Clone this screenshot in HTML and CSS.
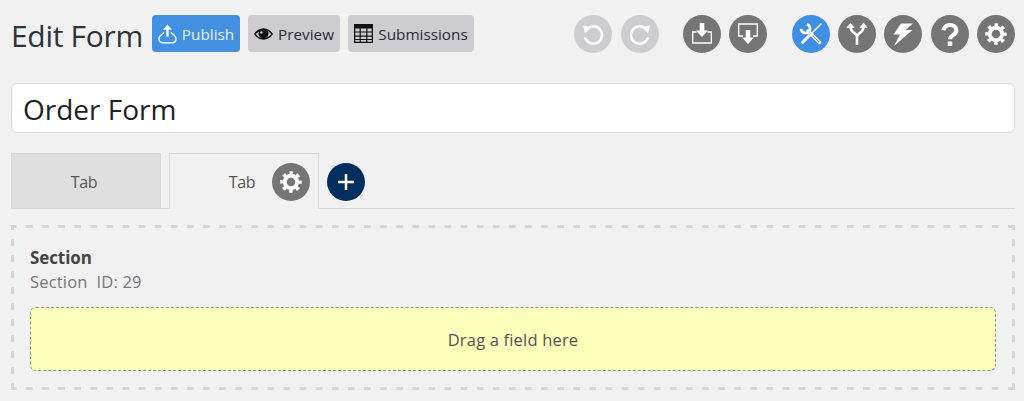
FILE: index.html
```html
<!DOCTYPE html>
<html lang="en">
<head>
<meta charset="utf-8">
<title>Edit Form</title>
<link rel="stylesheet" href="styles.css">
</head>
<body>
<svg class="defs" width="0" height="0" aria-hidden="true">
  <symbol id="gear" viewBox="0 0 24 24">
    <circle cx="12" cy="12" r="6.800" fill="none" stroke="#fff" stroke-width="4.200"/>
    <circle cx="12" cy="12" r="10" fill="none" stroke="#fff" stroke-width="3.400" stroke-dasharray="3.900 3.954" stroke-dashoffset="1.950"/>
  </symbol>
</svg>
<header class="toolbar">
  <h1 class="page-title">Edit Form</h1>
  <div class="actions">
    <button class="btn btn-blue">
      <svg class="btn-icon" viewBox="0 0 20 20"><path fill="none" stroke="#fff" stroke-width="1.400" d="M6.500 8.500C5 10 1 11.500 1 15c0 2.500 2 4.200 4 4.200h10c2.200 0 4-1.700 4-4.200 0-3-3.500-5-5.500-6.500"/><path fill="#fff" d="M10 0l4.600 5.500H11.200v7.500H8.800V5.500H5.400z"/></svg>
      Publish
    </button>
    <button class="btn btn-grey">
      <svg class="btn-icon eye" viewBox="0 0 20 12"><path fill="#111" fill-rule="evenodd" d="M0 6c2.500-3.800 6-6 10-6s7.500 2.200 10 6c-2.500 3.800-6 6-10 6S2.500 9.800 0 6zm1.800 0c1.500 2.100 3.400 3.500 5.400 4.200A5.300 5.300 0 0 1 4.700 6c0-.9.200-1.700.6-2.400C4 4.200 2.800 5 1.800 6zm11 4.200c2-.7 3.900-2.100 5.400-4.200-1-1.300-2.300-2.400-3.500-3 .4.900.600 1.900.600 3 0 1.700-1 3.200-2.500 4.200z"/><circle cx="7.800" cy="4.300" r="1.300" fill="#cdccd1"/></svg>
      Preview
    </button>
    <button class="btn btn-grey">
      <svg class="btn-icon table" viewBox="0 0 19 19"><path fill="#111" fill-rule="evenodd" d="M0 0h19v19H0zM1.300 4.500v3h4.300v-3zm5.500 0v3h5.400v-3zm6.600 0v3h4.300v-3zM1.300 8.600v3h4.300v-3zm5.500 0v3h5.400v-3zm6.600 0v3h4.300v-3zM1.300 12.700v2.300h4.300v-2.300zm5.500 0v2.300h5.400v-2.300zm6.600 0v2.300h4.300v-2.300zM1.300 16v1.700h4.300V16zm5.500 0v1.700h5.400V16zm6.600 0v1.700h4.300V16z"/></svg>
      Submissions
    </button>
  </div>
  <div class="circles">
    <div class="circle-group">
      <button class="circle circle-light" aria-label="Undo"><svg viewBox="0 0 24 24"><path fill="none" stroke="#fff" stroke-width="2.400" d="M6.200 6.800A8.700 8.700 0 1 1 4 15.500"/><path fill="#fff" d="M2 3.500l8.500 1.500-6.500 6.500z"/></svg></button>
      <button class="circle circle-light" aria-label="Redo"><svg viewBox="0 0 24 24"><path fill="none" stroke="#fff" stroke-width="2.400" d="M17.800 6.800A8.700 8.700 0 1 0 20 15.500"/><path fill="#fff" d="M22 3.500l-8.500 1.500 6.500 6.500z"/></svg></button>
    </div>
    <div class="circle-group">
      <button class="circle" aria-label="Import"><svg viewBox="0 0 24 24"><path fill="none" stroke="#fff" stroke-width="1.300" d="M6.500 10H2.700v11h18.600V10h-3.800"/><path fill="#fff" d="M9.700 1h4.600v7.500H18L12 15 6 8.500h3.700z"/></svg></button>
      <button class="circle" aria-label="Export"><svg viewBox="0 0 24 24"><path fill="none" stroke="#fff" stroke-width="1.300" d="M7 14H2.700V2h18.600v12H17"/><path fill="#fff" d="M9.700 8h4.600v7.500H18L12 22l-6-6.500h3.700z"/></svg></button>
    </div>
    <div class="circle-group">
      <button class="circle circle-blue" aria-label="Tools"><svg viewBox="0 0 24 24"><path fill="none" stroke="#fff" stroke-width="2.700" d="M7.800 2.200A4.500 4.500 0 1 1 2 7"/><path fill="none" stroke="#fff" stroke-width="3.400" stroke-linecap="round" d="M9 9l11.500 11.500"/><path fill="none" stroke="#3f8fe4" stroke-width=".9" stroke-linecap="round" d="M14 14l5.800 5.800"/><path fill="none" stroke="#fff" stroke-width="1.500" d="M22.500 1.500L12.500 11.500"/><path fill="none" stroke="#fff" stroke-width="3" stroke-linecap="round" d="M11 13l-7.300 7.300"/></svg></button>
      <button class="circle" aria-label="Branch"><svg viewBox="0 0 24 24"><path fill="none" stroke="#fff" stroke-width="2.600" d="M12 23v-8.500c0-3.500-6.500-3.500-6.500-9.500M12 14.500c0-3.500 6.500-3.500 6.500-9.500"/><path fill="#fff" d="M5.500.500l4.300 5.500H1.200zM18.500.500l4.300 5.500h-8.600z"/></svg></button>
      <button class="circle" aria-label="Actions"><svg viewBox="0 0 24 24"><path fill="#fff" d="M10 1.500h12l-7.500 6.500h7L3 24l6-11.500H2.500z"/></svg></button>
      <button class="circle" aria-label="Help"><svg viewBox="0 0 24 24"><path fill="none" stroke="#fff" stroke-width="4.200" d="M5.500 8.300C6.200 5 8.500 3 12 3c3.800 0 6.300 2.300 6.300 5.500 0 4.600-6.300 4.600-6.300 8.700"/><rect x="9.700" y="19.500" width="4.600" height="4.500" rx="1" fill="#fff"/></svg></button>
      <button class="circle" aria-label="Settings"><svg class="gear-icon" viewBox="0 0 24 24"><use href="#gear"/></svg></button>
    </div>
  </div>
</header>

<input class="title-input" type="text" value="Order Form" aria-label="Form name">

<nav class="tabs">
  <div class="tab">Tab</div>
  <div class="tab tab-active">
    <span class="tab-label">Tab</span>
    <button class="circle tab-gear" aria-label="Tab settings"><svg class="gear-icon" viewBox="0 0 24 24"><use href="#gear"/></svg></button>
  </div>
  <button class="circle circle-navy" aria-label="Add tab"><svg viewBox="0 0 24 24"><path fill="none" stroke="#fff" stroke-width="3" d="M12 2.500v19M2.500 12h19"/></svg></button>
</nav>

<section class="section">
  <h2 class="section-title">Section</h2>
  <p class="section-id">Section&nbsp; ID: 29</p>
  <div class="dropzone">Drag a field here</div>
</section>
</body>
</html>
```

FILE: styles.css
```css
* { box-sizing: border-box; }

html, body { height: 100%; }

body {
  margin: 0;
  padding: 15px 9px 0 11px;
  background: #f1f1f1;
  color: #333;
  font-family: "Open Sans", "Noto Sans", "Liberation Sans", sans-serif;
  overflow: hidden;
}

.defs { position: absolute; }

.toolbar {
  display: flex;
  align-items: flex-start;
  height: 38px;
}

.page-title {
  margin: 0 8px 0 0;
  width: 133px;
  font-size: 30px;
  font-weight: 400;
  line-height: 42px;
  letter-spacing: -.3px;
  white-space: nowrap;
  color: #2d333a;
}

.actions { display: flex; gap: 8px; }

.btn {
  display: flex;
  align-items: center;
  justify-content: center;
  gap: 5px;
  height: 37px;
  padding: 0;
  border: 1px solid transparent;
  border-radius: 4px;
  font: inherit;
  font-size: 15.300px;
  white-space: nowrap;
}

.btn-blue { width: 88px; background: #4190e2; color: #e8f2fc; }
.btn-grey { background: #cdccd1; color: #2b2b33; }
.btn-grey:nth-child(2) { width: 92px; }
.btn-grey:nth-child(3) { width: 126px; }

.btn-icon { width: 19px; height: 20px; flex: none; }
.eye { width: 19px; height: 12px; }
.table { width: 19px; height: 19px; }

.circles {
  display: flex;
  gap: 24.500px;
  margin-left: auto;
}

.circle-group { display: flex; gap: 8.300px; }

.circle {
  display: flex;
  align-items: center;
  justify-content: center;
  flex: none;
  width: 38px;
  height: 38px;
  padding: 0;
  border: 0;
  border-radius: 50%;
  background: #757575;
}

.circle svg { width: 24px; height: 24px; }
.circle .gear-icon { width: 22px; height: 22px; }
.circle-light { background: #cdccd1; }
.circle-blue { background: #3f8fe4; }
.circle-navy { background: #002e5f; }
.circle-navy svg { width: 20px; height: 20px; }

.title-input {
  display: block;
  width: 100%;
  height: 50px;
  margin-top: 30px;
  padding: 2px 11px 0;
  border: 1px solid #d9d9d9;
  border-radius: 6px;
  background: #fff;
  color: #222;
  font: inherit;
  font-size: 28px;
}

.tabs {
  display: flex;
  align-items: flex-start;
  gap: 8px;
  height: 56px;
  margin-top: 20px;
  border-bottom: 1px solid #d8d8d8;
}

.tab {
  display: flex;
  align-items: center;
  justify-content: center;
  width: 150px;
  height: 55px;
  padding: 2px 4px 0 0;
  border: 1px solid #d8d8d8;
  border-bottom: 0;
  background: #dfdfdf;
  color: #555;
  font-size: 16px;
  letter-spacing: -.3px;
}

.tab-active {
  position: relative;
  height: 56px;
  background: #f1f1f1;
}

.tab-label { margin-bottom: 2px; }

.tab-gear {
  position: absolute;
  top: 9px;
  right: 8px;
}

.tabs > .circle { margin-top: 10px; }

.section {
  height: 165px;
  margin-top: 16px;
  padding: 22px 19px 0;
  background-color: transparent;
  background-image:
    linear-gradient(90deg, #d5d5d9 6px, transparent 6px, transparent 15.100px, #d5d5d9 15.100px),
    linear-gradient(90deg, #d5d5d9 6px, transparent 6px, transparent 15.100px, #d5d5d9 15.100px),
    linear-gradient(0deg, #d5d5d9 7px, transparent 7px),
    linear-gradient(0deg, #d5d5d9 7px, transparent 7px);
  background-size: 16.100px 3px, 16.100px 3px, 3px 16px, 3px 16px;
  background-position: left top, left bottom, left bottom, right bottom;
  background-repeat: repeat-x, repeat-x, repeat-y, repeat-y;
}

.section-title {
  margin: 0;
  font-size: 17px;
  font-weight: 700;
  line-height: 22px;
  letter-spacing: -.1px;
  color: #444;
}

.section-id {
  margin: 2px 0 0;
  font-size: 16.500px;
  line-height: 22px;
  letter-spacing: .18px;
  color: #777;
}

.dropzone {
  display: flex;
  align-items: center;
  justify-content: center;
  height: 64px;
  margin-top: 14px;
  border: 1px dashed #8f8f8f;
  border-radius: 6px;
  background: #faffba;
  color: #555;
  font-size: 16.500px;
  letter-spacing: .18px;
}
```
